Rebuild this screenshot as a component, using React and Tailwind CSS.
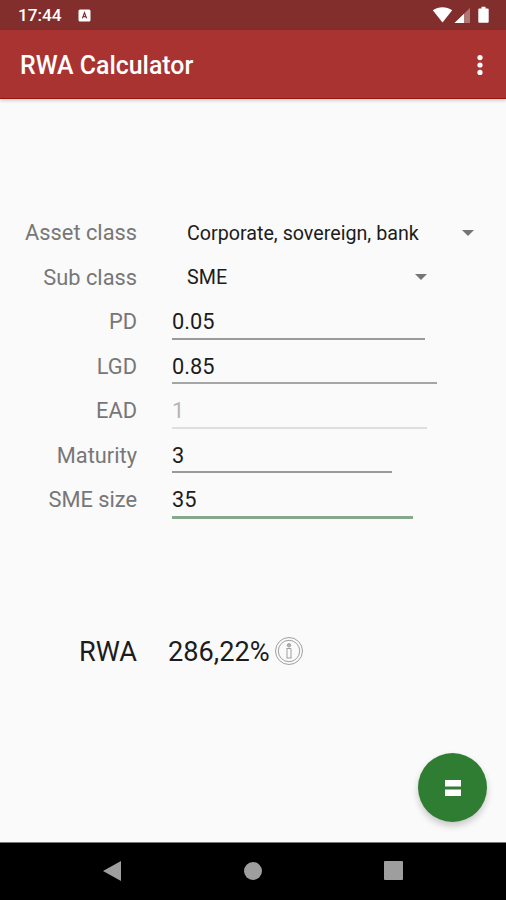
import React from 'react'

const StatusBar = () => {
  return (
    <div className="flex h-[30px] shrink-0 items-center bg-[#812e2c] pl-[18px] pr-[16px] text-white">
      <span className="pt-[2px] text-[17.2px] font-medium leading-none">17:44</span>
      <svg className="ml-[16px]" width="13" height="13" viewBox="0 0 13 13">
        <rect x="0.5" y="0.5" width="12" height="12" rx="1.5" fill="white" />
        <path d="M4.4 9.4 6.5 3.8l2.1 5.6M5.2 7.7h2.6" fill="none" stroke="#812e2c" strokeWidth="1.2" />
      </svg>
      <svg className="ml-auto" width="58" height="18" viewBox="0 0 58 18">
        <path d="M0.8 4.3C6.5.1 14.5.1 20.2 4.3L10.5 16.5Z" fill="white" />
        <path d="M38 2v15H22.500Z" fill="white" fillOpacity="0.35" />
        <path d="M32 7.700V17h-9.500Z" fill="white" />
        <path d="M49.5 0.8h4v1.7h2.2a1 1 0 0 1 1 1v12.3a1 1 0 0 1-1 1h-8.4a1 1 0 0 1-1-1V3.5a1 1 0 0 1 1-1h2.2Z" fill="white" />
      </svg>
    </div>
  )
}

const AppBar = () => {
  return (
    <header className="z-10 flex h-[69px] shrink-0 items-center justify-between border-b border-[#981510] bg-[#a93331] pl-[20px] pr-[23px] pt-[2px] text-white shadow-[0_2px_3px_rgba(0,0,0,0.16)]">
      <h1 className="pt-[2px] text-[24.9px] font-medium leading-none">RWA Calculator</h1>
      <button type="button" aria-label="More options">
        <svg width="6" height="20" viewBox="0 0 6 20" fill="white">
          <circle cx="3" cy="2.6" r="2.6" />
          <circle cx="3" cy="10" r="2.6" />
          <circle cx="3" cy="17.4" r="2.6" />
        </svg>
      </button>
    </header>
  )
}

const Row = ({ label, children }) => {
  return (
    <div className="flex h-[44.5px] items-start">
      <span className="w-[137px] pt-[9.4px] text-right text-[21.8px] leading-[26px] text-[#777]">
        {label}
      </span>
      {children}
    </div>
  )
}

const Spinner = ({ value, className }) => {
  return (
    <div className={`ml-[50px] flex h-[44px] items-center justify-between ${className}`}>
      <span className="pt-px text-[19.7px] leading-none text-[#1c1c1c]">{value}</span>
      <svg className="mb-px" width="12" height="6" viewBox="0 0 12 6" fill="#757575">
        <path d="M0 0h12L6 6Z" />
      </svg>
    </div>
  )
}

const Field = ({ value, className }) => {
  return (
    <div className={`ml-[35px] pt-[9px] text-[21.8px] leading-[26px] ${className}`}>{value}</div>
  )
}

const App = () => {
  return (
    <div className="flex h-[900px] w-[506px] flex-col overflow-hidden bg-[#fafafa] font-['Roboto',sans-serif]">
      <StatusBar />
      <AppBar />
      <main className="flex flex-1 flex-col pt-[112px]">
        <Row label="Asset class">
          <Spinner value="Corporate, sovereign, bank" className="w-[287px]" />
        </Row>
        <Row label="Sub class">
          <Spinner value="SME" className="w-[240px]" />
        </Row>
        <Row label="PD">
          <Field value="0.05" className="h-[39.5px] w-[253px] border-b-2 border-[#9a9a9a] text-[#1c1c1c]" />
        </Row>
        <Row label="LGD">
          <Field value="0.85" className="h-[39.5px] w-[265px] border-b-2 border-[#a5a5a5] text-[#1c1c1c]" />
        </Row>
        <Row label="EAD">
          <Field value="1" className="h-[39.5px] w-[255px] border-b-2 border-[#dedede] text-[#b5b5b5]" />
        </Row>
        <Row label="Maturity">
          <Field value="3" className="h-[39.5px] w-[220px] border-b-2 border-[#9a9a9a] text-[#1c1c1c]" />
        </Row>
        <Row label="SME size">
          <Field value="35" className="h-[40.5px] w-[241px] border-b-3 border-[#86a88c] text-[#1c1c1c]" />
        </Row>
        <div className="mt-[102px] flex h-[56px] items-center text-[27.2px] leading-none text-[#1c1c1c]">
          <span className="w-[137px] text-right">RWA</span>
          <span className="ml-[31px]">286,22%</span>
          <svg className="ml-[4px] mb-[4px]" width="30" height="30" viewBox="0 0 30 30" fill="none" stroke="#a0a0a0">
            <circle cx="15" cy="15" r="13.5" />
            <circle cx="15" cy="15" r="10.7" />
            <circle cx="15" cy="9.3" r="1.7" fill="#b5b5b5" />
            <path d="M12.5 12.5h4.500v9.500M13 12.5v9.500M12.500 22h5" />
          </svg>
        </div>
        <button
          type="button"
          aria-label="Calculate"
          className="mb-[20px] mr-[19px] mt-auto flex size-[69px] items-center justify-center self-end rounded-full bg-[#2e7d32] shadow-[0_4px_7px_rgba(0,0,0,0.2)]"
        >
          <svg width="16" height="16" viewBox="0 0 16 16" fill="white">
            <path d="M0 0h16v6.5H0ZM0 9.5h16V16H0Z" />
          </svg>
        </button>
      </main>
      <nav className="flex h-[58px] shrink-0 items-center justify-between border-t border-[#777] bg-black pb-[2px] pl-[103px] pr-[103px] text-[#9e9e9e]">
        <svg width="18" height="20" viewBox="0 0 18 20" fill="currentColor">
          <path d="M0 10 18 0v20Z" />
        </svg>
        <svg width="18" height="18" viewBox="0 0 18 18" fill="currentColor">
          <circle cx="9" cy="9" r="9" />
        </svg>
        <svg width="19" height="19" viewBox="0 0 19 19" fill="currentColor">
          <rect width="19" height="19" rx="1" />
        </svg>
      </nav>
    </div>
  )
}

export default App
